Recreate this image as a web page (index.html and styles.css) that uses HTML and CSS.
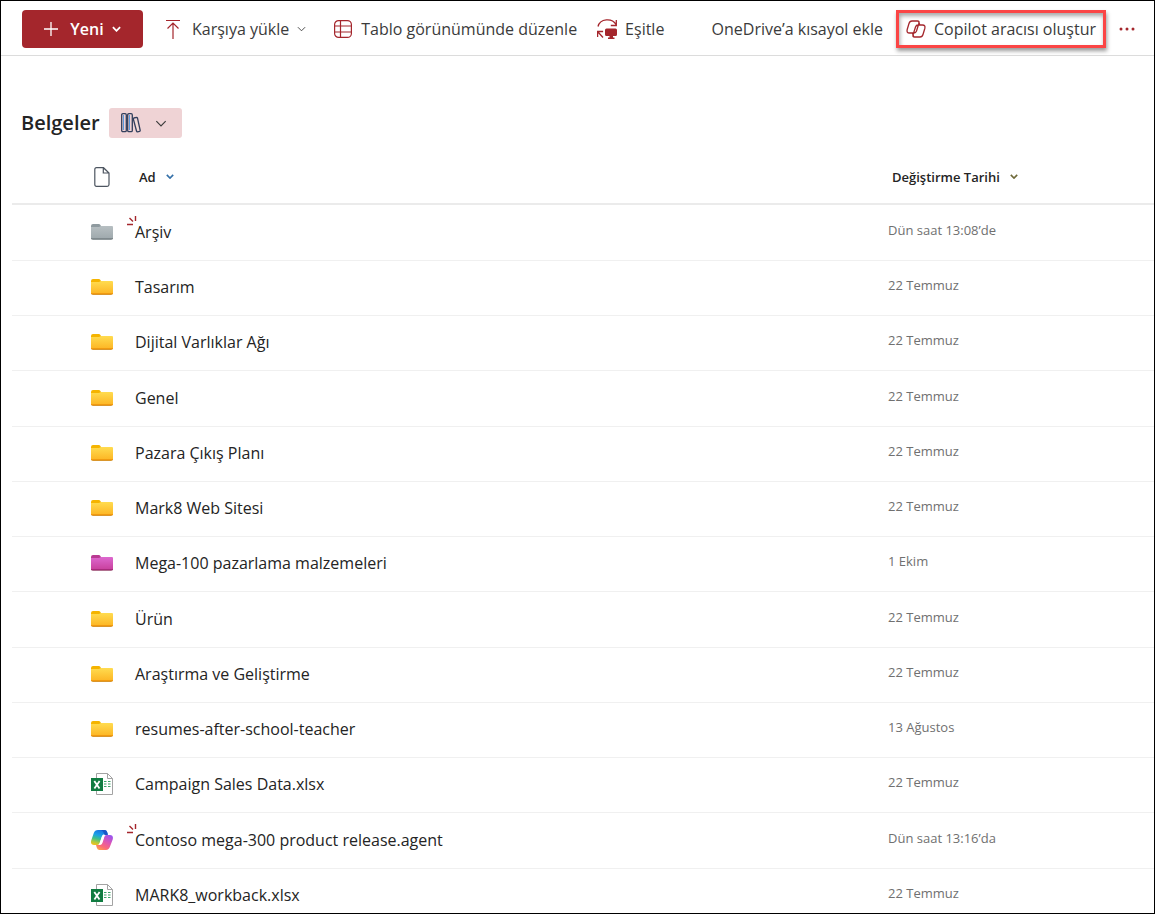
FILE: index.html
```html
<!DOCTYPE html>
<html lang="tr">
<head>
<meta charset="utf-8">
<meta name="viewport" content="width=device-width, initial-scale=1">
<title>Belgeler</title>
<link rel="stylesheet" href="styles.css">
</head>
<body>
<svg class="defs" width="0" height="0" aria-hidden="true">
  <defs>
    <linearGradient id="g-yellow" x1="0" y1="0" x2="0" y2="1"><stop offset="0" stop-color="#ffdc50"/><stop offset="1" stop-color="#fdb827"/></linearGradient>
    <linearGradient id="g-gray" x1="0" y1="0" x2="0" y2="1"><stop offset="0" stop-color="#b7bfc2"/><stop offset="1" stop-color="#a0aaae"/></linearGradient>
    <linearGradient id="g-pink" x1="0" y1="0" x2="0" y2="1"><stop offset="0" stop-color="#dd68cf"/><stop offset="1" stop-color="#c9429f"/></linearGradient>
    <linearGradient id="g-cop1" x1="0.6" y1="0" x2="0.3" y2="1"><stop offset="0" stop-color="#1b6fe0"/><stop offset="0.35" stop-color="#1aa0e8"/><stop offset="0.6" stop-color="#3fc08a"/><stop offset="0.85" stop-color="#b9c93a"/><stop offset="1" stop-color="#f0c020"/></linearGradient>
    <linearGradient id="g-cop2" x1="0.8" y1="0" x2="0.2" y2="1"><stop offset="0" stop-color="#9a55ee"/><stop offset="0.4" stop-color="#dd55b5"/><stop offset="0.75" stop-color="#fb6a78"/><stop offset="1" stop-color="#ffa04a"/></linearGradient>
  </defs>
  <symbol id="chevron" viewBox="0 0 10 6"><path d="M1 1l4 4 4-4" fill="none" stroke="currentColor"/></symbol>
  <symbol id="folder-yellow" viewBox="0 0 22 16"><path d="M0 3h22v11q0 2-2 2H2q-2 0-2-2z" fill="#d9962b"/><path d="M0 2h21q1 0 1 1v11H0z" fill="url(#g-yellow)"/><path d="M0 14h22v1H0z" fill="#f19a10"/><path d="M0 4V2q0-2 2-2h6q1 0 2 2L8 3H0z" fill="#f5b400"/></symbol>
  <symbol id="folder-gray" viewBox="0 0 22 16"><path d="M0 3h22v11q0 2-2 2H2q-2 0-2-2z" fill="#8f989b"/><path d="M0 2h21q1 0 1 1v11H0z" fill="url(#g-gray)"/><path d="M0 14h22v1H0z" fill="#7f898d"/><path d="M0 4V2q0-2 2-2h6q1 0 2 2L8 3H0z" fill="#8f9a9f"/></symbol>
  <symbol id="folder-pink" viewBox="0 0 22 16"><path d="M0 3h22v11q0 2-2 2H2q-2 0-2-2z" fill="#b0708f"/><path d="M0 2h21q1 0 1 1v11H0z" fill="url(#g-pink)"/><path d="M0 14h22v1H0z" fill="#a82a7c"/><path d="M0 4V2q0-2 2-2h6q1 0 2 2L8 3H0z" fill="#b93a92"/></symbol>
  <symbol id="excel" viewBox="0 0 22 22"><path d="M5.500.5h11l5 5v16h-16z" fill="#fff" stroke="#a3a3a3"/><path d="M16.500.5v5h5" fill="none" stroke="#a3a3a3"/><path d="M13 8h2.500v1H13zM17 8h2.500v1H17zM13 10.500h2.500v1H13zM17 10.500h2.500v1H17zM13 13h2.500v1H13zM17 13h2.500v1H17z" fill="#3aa268"/><rect y="5" width="12" height="13" fill="#107c41"/><path d="M3.300 8l5.200 7.500M8.600 8l-5.200 7.500" stroke="#fff" stroke-width="1.800"/></symbol>
  <symbol id="copilot-color" viewBox="0 0 22 20"><path d="M7 0h6.500q2 0 2.600 2l.7 2.300h-3.600q-1.500 0-2 1.700L8.700 13q-.7 2-2.500 2H3Q-.8 15 .2 10.600L2.800 3Q3.800 0 7 0z" fill="url(#g-cop1)"/><path d="M15.500 5H19q3.800.3 2.700 4.400L19.200 16Q18 20 15 20H8.500q-2 0-2.600-2L5 15h3.800q1.500 0 2-1.700l2.300-6.600Q13.700 5 15.500 5z" fill="url(#g-cop2)"/><path d="M10 0h3.500q2 0 2.600 2l.9 3h-3.500q-1-4-3.500-5z" fill="#1857c8"/><path d="M11.200 5.500h2.600l-2.400 7.500q-.5 1.500-2 1.500H8.200z" fill="#fff"/></symbol>
  <symbol id="new-mark" viewBox="0 0 10 10"><path d="M8.500 0v5M2.500 2l3.500 3.500M0 8.500h6" fill="none" stroke="#a4262c" stroke-width="1.400"/></symbol>
</svg>

<div class="page">
  <header class="toolbar">
    <button class="btn-new" type="button"><svg width="14" height="14" viewBox="0 0 14 14" aria-hidden="true"><path d="M7 0v14M0 7h14" stroke="#fff" stroke-width="1.300"/></svg><span>Yeni</span><svg class="thick" width="9" height="6"><use href="#chevron"/></svg></button>
    <button class="cmd cmd-upload" type="button"><svg width="14" height="20" viewBox="0 0 14 20" aria-hidden="true"><path d="M0 1.500h14M7 20V4.500M1.500 9.500L7 4l5.500 5.500" fill="none" stroke="#a4262c" stroke-width="1.200"/></svg><span>Karşıya yükle</span><svg class="dark" width="9" height="6"><use href="#chevron"/></svg></button>
    <button class="cmd cmd-grid" type="button"><svg width="18" height="18" viewBox="0 0 18 18" aria-hidden="true"><rect x=".6" y=".6" width="16.800" height="16.800" rx="4" fill="none" stroke="#a4262c" stroke-width="1.200"/><path d="M.5 6h17M.5 12h17M6.500.5v17" fill="none" stroke="#a4262c" stroke-width="1.200"/></svg><span>Tablo görünümünde düzenle</span></button>
    <button class="cmd cmd-sync" type="button"><svg width="20" height="20" viewBox="0 0 20 20" aria-hidden="true"><path d="M1 7.500C3-.5 15-1.500 19 5.500M19.300 1v5.500h-5.500M.6 18V12.500h5.500M1 13l5 5.500" fill="none" stroke="#a4262c" stroke-width="1.300"/><path d="M9.500 9.500h9q1.500 0 1.500 1.500v4.500q0 1.500-1.500 1.500H16v1.500h1.500V20h-6.500v-1.500h1.500V17h-3Q8 17 8 15.500V11q0-1.500 1.500-1.500z" fill="#a4262c"/></svg><span>Eşitle</span></button>
    <button class="cmd cmd-shortcut" type="button"><span>OneDrive’a kısayol ekle</span></button>
    <button class="cmd cmd-copilot" type="button"><svg width="20" height="18" viewBox="0 0 20 18" aria-hidden="true"><path d="M6 1h5.500q2 0 1.500 2l-2.500 8q-.7 2-2.500 2H3.500Q.3 13 1.200 9.500L3 3.500Q3.700 1 6 1zM14 17H8.500q-2 0-1.500-2l2.500-8q.7-2 2.500-2h4.500q3.200 0 2.300 3.500l-1.800 6q-.7 2.500-3 2.500zM12.500 1.300l1.200 3.500M6.500 13.200l1.200 3.500" fill="none" stroke="#a4262c" stroke-width="1.300" stroke-linejoin="round"/></svg><span>Copilot aracısı oluştur</span></button>
    <button class="cmd cmd-more" type="button" aria-label="Diğer"><svg width="16" height="4" viewBox="0 0 16 4"><g fill="#a4262c"><circle cx="2" cy="2" r="1.500"/><circle cx="8" cy="2" r="1.500"/><circle cx="14" cy="2" r="1.500"/></g></svg></button>
  </header>

  <main class="library">
    <div class="heading">
      <h1>Belgeler</h1>
      <button class="view-switch" type="button" aria-label="Kitaplık görünümü"><svg width="20" height="20" viewBox="0 0 20 20" aria-hidden="true"><g fill="none" stroke="#323f5c" stroke-width="1.300"><rect x=".7" y=".7" width="4.600" height="18" rx="1.200"/><rect x="6.700" y=".7" width="4.600" height="18" rx="1.200"/><path d="M12.800 5l2.700-.7q.7 0 1 .8l2.700 12.300q0 .8-.7 1l-2 .4q-.8 0-1-.8L12.300 6q0-.8.5-1z"/></g><path d="M2.500 2v15M8.500 2v15" stroke="#5b9be0"/><path d="M14.700 7l2.300 10" stroke="#f4e3d6"/></svg><svg class="dark" width="12" height="7"><use href="#chevron"/></svg></button>
    </div>

    <table class="files">
      <colgroup><col class="col-icon"><col><col class="col-date"></colgroup>
      <thead>
        <tr>
          <th class="icon" scope="col" aria-label="Tür"><svg width="16" height="20" viewBox="0 0 16 20" aria-hidden="true"><path d="M2.500.7H9.500L15 6v11.500q0 1.800-1.800 1.800H2.500Q.8 19.300.8 17.500V2.500Q.8.7 2.500.7zM9.300.8V6H15" fill="none" stroke="#4d5560" stroke-width="1.200"/></svg></th>
          <th scope="col"><button type="button">Ad <svg class="blue" width="8" height="5"><use href="#chevron"/></svg></button></th>
          <th scope="col"><button type="button">Değiştirme Tarihi <svg class="olive" width="8" height="5"><use href="#chevron"/></svg></button></th>
        </tr>
      </thead>
      <tbody>
        <tr><td class="icon"><svg width="22" height="16"><use href="#folder-gray"/></svg></td><td><a href="#" class="is-new"><svg class="mark" width="10" height="10"><use href="#new-mark"/></svg>Arşiv</a></td><td class="date">Dün saat 13:08’de</td></tr>
        <tr><td class="icon"><svg width="22" height="16"><use href="#folder-yellow"/></svg></td><td><a href="#">Tasarım</a></td><td class="date">22 Temmuz</td></tr>
        <tr><td class="icon"><svg width="22" height="16"><use href="#folder-yellow"/></svg></td><td><a href="#">Dijital Varlıklar Ağı</a></td><td class="date">22 Temmuz</td></tr>
        <tr><td class="icon"><svg width="22" height="16"><use href="#folder-yellow"/></svg></td><td><a href="#">Genel</a></td><td class="date">22 Temmuz</td></tr>
        <tr><td class="icon"><svg width="22" height="16"><use href="#folder-yellow"/></svg></td><td><a href="#">Pazara Çıkış Planı</a></td><td class="date">22 Temmuz</td></tr>
        <tr><td class="icon"><svg width="22" height="16"><use href="#folder-yellow"/></svg></td><td><a href="#">Mark8 Web Sitesi</a></td><td class="date">22 Temmuz</td></tr>
        <tr><td class="icon"><svg width="22" height="16"><use href="#folder-pink"/></svg></td><td><a href="#">Mega-100 pazarlama malzemeleri</a></td><td class="date">1 Ekim</td></tr>
        <tr><td class="icon"><svg width="22" height="16"><use href="#folder-yellow"/></svg></td><td><a href="#">Ürün</a></td><td class="date">22 Temmuz</td></tr>
        <tr><td class="icon"><svg width="22" height="16"><use href="#folder-yellow"/></svg></td><td><a href="#">Araştırma ve Geliştirme</a></td><td class="date">22 Temmuz</td></tr>
        <tr><td class="icon"><svg width="22" height="16"><use href="#folder-yellow"/></svg></td><td><a href="#">resumes-after-school-teacher</a></td><td class="date">13 Ağustos</td></tr>
        <tr><td class="icon"><svg width="22" height="22"><use href="#excel"/></svg></td><td><a href="#">Campaign Sales Data.xlsx</a></td><td class="date">22 Temmuz</td></tr>
        <tr><td class="icon"><svg width="22" height="20"><use href="#copilot-color"/></svg></td><td><a href="#" class="is-new"><svg class="mark" width="10" height="10"><use href="#new-mark"/></svg>Contoso mega-300 product release.agent</a></td><td class="date">Dün saat 13:16’da</td></tr>
        <tr><td class="icon"><svg width="22" height="22"><use href="#excel"/></svg></td><td><a href="#">MARK8_workback.xlsx</a></td><td class="date">22 Temmuz</td></tr>
      </tbody>
    </table>
  </main>
</div>
</body>
</html>
```
FILE: styles.css
```css
* { box-sizing: border-box; }
body { margin: 0; background: #fff; color: #242424; font: 16px/24px "Open Sans", "Noto Sans", sans-serif; }
button { margin: 0; padding: 0; border: 0; background: none; color: inherit; font: inherit; cursor: pointer; }
svg { display: block; flex: none; }
.defs { position: absolute; }
.page { height: 100vh; overflow: hidden; border: 1px solid #000; }

.toolbar { display: flex; align-items: center; height: 55px; padding: 1px 19px 0 21px; border-bottom: 1px solid #dcdcdc; white-space: nowrap; color: #3b3b3b; }
.btn-new { display: flex; align-items: center; justify-content: center; gap: 12px; width: 121px; height: 38px; border-radius: 4px; background: #a4262c; color: #fff; font-weight: 600; }
.btn-new .thick { margin-left: -4px; stroke-width: 2; }
.cmd { display: flex; align-items: center; }
.cmd-upload { gap: 12px; margin-left: 23px; }
.cmd-upload .dark { margin-left: -4px; stroke-width: 1; }
.cmd-grid { gap: 9px; margin-left: 28px; }
.cmd-sync { gap: 8px; margin-left: 20px; }
.cmd-shortcut { margin-left: auto; }
.cmd-copilot { gap: 8px; height: 38px; margin: 0 13px; padding: 0 7px; border: 3px solid #fb4545; box-shadow: 1px 3px 4px rgb(0 0 0 / 40%), inset 1px 3px 4px rgb(0 0 0 / 35%); }
.dark { color: #3b3b3b; }
.blue { color: #3470a8; }
.olive { color: #6f6a3a; }
th svg { stroke-width: 2; }

.library { padding-left: 11px; }
.heading { display: flex; align-items: center; gap: 9px; padding: 52px 0 0 9px; }
h1 { margin: 0; font-size: 20px; line-height: 30px; font-weight: 600; }
.view-switch { display: flex; align-items: center; gap: 14px; width: 73px; height: 30px; padding-left: 12px; border-radius: 3px; background: #efd3d5; }

.files { width: 100%; margin-top: 12px; border-spacing: 0; table-layout: fixed; }
.col-icon { width: 123px; }
.col-date { width: 266px; }
th, td { padding: 0; text-align: left; }
th { height: 55px; border-bottom: 2px solid #ebebeb; font-size: 13px; line-height: 20px; font-weight: 600; }
th button { display: flex; align-items: center; gap: 10px; padding-left: 4px; }
td { height: 55px; padding-bottom: 2px; border-bottom: 1px solid #f0f0f0; }
tbody tr:first-child td, tbody tr:nth-child(4n) td { height: 56px; }
.icon { padding-left: 79px; }
th.icon { padding-left: 82px; }
td a { position: relative; color: inherit; text-decoration: none; }
.mark { position: absolute; left: -8px; top: -5px; }
td.date { padding-bottom: 6px; color: #707070; font-size: 13px; line-height: 20px; }
```
